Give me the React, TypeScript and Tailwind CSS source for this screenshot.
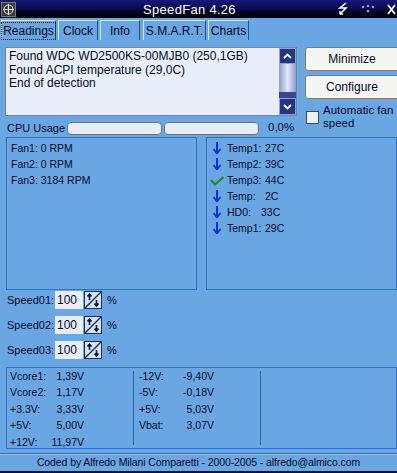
import React from "react";

const font = { fontFamily: '"Liberation Sans", Arial, sans-serif' };

function DownArrow() {
  return (
    <svg width="14" height="12" viewBox="0 0 14 12" className="shrink-0">
      <path d="M7 0v10" stroke="#1030e0" strokeWidth="2" />
      <path d="M3.5 7l3.5 4.5 3.5-4.5" stroke="#1030e0" strokeWidth="1.8" fill="none" />
    </svg>
  );
}

function Check() {
  return (
    <svg width="14" height="12" viewBox="0 0 14 12" className="shrink-0">
      <path d="M1 6l4 4.5L13.5 3" stroke="#1a8a2a" strokeWidth="2.2" fill="none" />
    </svg>
  );
}

function Spinner() {
  return (
    <svg width="18" height="18" viewBox="0 0 18 18" className="shrink-0">
      <rect x="0.5" y="0.5" width="17" height="17" fill="#d6e4f7" stroke="#1c2d6e" />
      <path d="M1 17L17 1" stroke="#1c2d6e" strokeWidth="1.4" />
      <path d="M5.5 9V3M3.5 5.5l2-2.5 2 2.5" stroke="#0a1440" strokeWidth="1.6" fill="none" />
      <path d="M12.5 9v6M10.5 12.5l2 2.5 2-2.5" stroke="#0a1440" strokeWidth="1.6" fill="none" />
    </svg>
  );
}

const tabs = [
  { label: "Readings", w: "w-[55px]", ml: "ml-[1px]" },
  { label: "Clock", w: "w-[40px]", ml: "ml-[2px]" },
  { label: "Info", w: "w-[40px]", ml: "ml-[2px]" },
  { label: "S.M.A.R.T.", w: "w-[63px]", ml: "ml-[3px]" },
  { label: "Charts", w: "w-[41px]", ml: "ml-[2px]" },
];

const temps = [
  { icon: "down", label: "Temp1:", value: "27C", vc: "" },
  { icon: "down", label: "Temp2:", value: "39C", vc: "" },
  { icon: "check", label: "Temp3:", value: "44C", vc: "" },
  { icon: "down", label: "Temp:", value: "2C", vc: "" },
  { icon: "down", label: "HD0:", value: "33C", vc: "-ml-[4px]" },
  { icon: "down", label: "Temp1:", value: "29C", vc: "" },
];

const volts1 = [
  ["Vcore1:", "1,39V"],
  ["Vcore2:", "1,17V"],
  ["+3.3V:", "3,33V"],
  ["+5V:", "5,00V"],
  ["+12V:", "11,97V"],
];

const volts2 = [
  ["-12V:", "-9,40V"],
  ["-5V:", "-0,18V"],
  ["+5V:", "5,03V"],
  ["Vbat:", "3,07V"],
];

export default function App() {
  return (
    <div
      className="w-[397px] h-[473px] overflow-hidden bg-[#6aa6e2] text-[#050a2a] flex flex-col whitespace-nowrap"
      style={font}
    >
      {/* title bar */}
      <div className="h-[18px] shrink-0 bg-gradient-to-b from-[#17177e] via-[#0b0b4a] to-black flex items-center">
        <svg width="15" height="15" viewBox="0 0 15 15" className="ml-[1px]">
          <rect x="0.5" y="0.5" width="14" height="14" fill="#3a3a3a" stroke="#777" />
          <circle cx="7.5" cy="7.5" r="4.5" fill="none" stroke="#ccc" strokeWidth="1.2" />
          <path d="M7.5 2v11M2 7.5h11" stroke="#ddd" strokeWidth="1.2" />
        </svg>
        <div className="flex-1 text-center text-white text-[13px] leading-none pl-[26px] tracking-[0.3px]">
          SpeedFan 4.26
        </div>
        <svg width="12" height="14" viewBox="0 0 12 14" className="mr-[12px]">
          <path d="M9 1L3 6h6L3 12" stroke="#fff" strokeWidth="1.6" fill="none" />
          <path d="M3 12v-3M3 12h3" stroke="#fff" strokeWidth="1.4" />
        </svg>
        <svg width="14" height="10" viewBox="0 0 14 10" className="mr-[12px]">
          <circle cx="2" cy="3" r="1.3" fill="#8a9ad0" />
          <circle cx="7" cy="2" r="1.3" fill="#8a9ad0" />
          <circle cx="12" cy="3" r="1.3" fill="#8a9ad0" />
          <circle cx="7" cy="7" r="1.3" fill="#8a9ad0" />
        </svg>
        <svg width="9" height="11" viewBox="0 0 9 11" className="mr-[1px]">
          <path d="M1 1l7 9M8 1L1 10" stroke="#fff" strokeWidth="1.8" />
        </svg>
      </div>

      {/* tabs */}
      <div className="h-[22px] shrink-0 flex items-end pt-[2px]">
        {tabs.map((t, i) => (
          <div
            key={t.label}
            className={`${t.w} ${t.ml} h-[20px] border-l border-t border-r border-l-[#d4e6fa] border-t-[#d4e6fa] border-r-[#28518c] flex items-center justify-center text-[12px] leading-none`}
          >
            {i === 0 ? (
              <span className="border border-dotted border-[#101830] px-[1px] py-[2px]">{t.label}</span>
            ) : (
              t.label
            )}
          </div>
        ))}
      </div>

      {/* top area */}
      <div className="flex mt-[7px] shrink-0">
        <div className="w-[300px] shrink-0 pl-[5px]">
          <div className="w-[292px] h-[69px] border border-[#7a8592] bg-[#e7eef9] flex">
            <div className="flex-1 px-[3px] pt-[2px] text-[12px] leading-[13.5px] overflow-hidden">
              <div>Found WDC WD2500KS-00MJB0 (250,1GB)</div>
              <div>Found ACPI temperature (29,0C)</div>
              <div>End of detection</div>
            </div>
            <div className="w-[17px] flex flex-col">
              <div className="h-[16px] bg-[#26357f] flex items-center justify-center border border-[#8fa0d8]">
                <svg width="9" height="6" viewBox="0 0 9 6">
                  <path d="M1 5l3.5-3.5L8 5" stroke="#fff" strokeWidth="1.8" fill="none" />
                </svg>
              </div>
              <div className="flex-1 bg-gradient-to-r from-[#8e9bd0] via-[#e3e9f8] to-[#8e9bd0]" />
              <div className="h-[6px] bg-[#38478e]" />
              <div className="h-[17px] bg-[#26357f] flex items-center justify-center border border-[#8fa0d8]">
                <svg width="9" height="6" viewBox="0 0 9 6">
                  <path d="M1 1l3.5 3.5L8 1" stroke="#fff" strokeWidth="1.8" fill="none" />
                </svg>
              </div>
            </div>
          </div>
          <div className="flex items-center h-[18px] mt-[3px] text-[11px]">
            <span className="ml-[2px] w-[60px]">CPU Usage</span>
            <div className="w-[95px] h-[13px] rounded-[4px] border border-[#6b7480] bg-[#e7eef9]" />
            <div className="w-[95px] h-[13px] ml-[2px] rounded-[4px] border border-[#6b7480] bg-[#e7eef9]" />
            <span className="ml-[9px] text-[11.5px]">0,0%</span>
          </div>
        </div>
        <div className="flex-1 flex flex-col pl-[5px]">
          <div className="h-[24px] w-[110px] rounded-[3px] border border-[#7c7c7c] bg-[#f5f5f1] flex items-center text-[12px]">
            <span className="w-[92px] text-center">Minimize</span>
          </div>
          <div className="h-[24px] w-[110px] mt-[4px] rounded-[3px] border border-[#7c7c7c] bg-[#f5f5f1] flex items-center text-[12px]">
            <span className="w-[92px] text-center">Configure</span>
          </div>
          <div className="flex mt-[4px] text-[11.5px] leading-[13px]">
            <div className="w-[13px] h-[13px] ml-[1px] mt-[8px] border border-[#3a4a6a] bg-[#eef2f8]" />
            <div className="ml-[4px] pt-[1px]">
              Automatic fan
              <br />
              speed
            </div>
          </div>
        </div>
      </div>

      {/* fans & temps */}
      <div className="flex h-[153px] shrink-0 text-[10.5px]">
        <div className="w-[191px] ml-[6px] border border-[#2f6fcf] pt-[2px] pl-[4px] leading-[16px]">
          <div>Fan1: 0 RPM</div>
          <div>Fan2: 0 RPM</div>
          <div>Fan3: 3184 RPM</div>
        </div>
        <div className="w-[191px] ml-[9px] border border-[#2f6fcf] pt-[2px] pl-[3px] leading-[16px]">
          {temps.map((t, i) => (
            <div key={i} className="flex items-center h-[16px]">
              {t.icon === "down" ? <DownArrow /> : <Check />}
              <span className="ml-[3px] w-[38px]">{t.label}</span>
              <span className={t.vc}>{t.value}</span>
            </div>
          ))}
        </div>
      </div>

      {/* speeds */}
      <div className="flex flex-col mt-[1px] shrink-0 text-[11px]">
        {["Speed01:", "Speed02:", "Speed03:"].map((s, i) => (
          <div key={s} className={`flex items-center h-[18px] ${i > 0 ? "mt-[7px]" : ""}`}>
            <span className="ml-[7px] w-[48px]">{s}</span>
            <div className="w-[28px] h-[18px] bg-[#e7eef9] pl-[2px] leading-[18px] text-[12px]">100</div>
            <div className="ml-[1px]">
              <Spinner />
            </div>
            <span className="ml-[5px]">%</span>
          </div>
        ))}
      </div>

      {/* voltages */}
      <div className="ml-[6px] mt-[8px] h-[82px] shrink-0 border border-[#2f6fcf] flex text-[10.5px] leading-[16.4px] overflow-hidden">
        <div className="w-[126px] pl-[3px] pr-[49px] pt-[0px]">
          {volts1.map(([l, v]) => (
            <div key={l} className="flex justify-between">
              <span>{l}</span>
              <span>{v}</span>
            </div>
          ))}
        </div>
        <div className="w-px bg-[#2a60b8] my-[3px]" />
        <div className="w-[126px] pl-[5px] pr-[46px]">
          {volts2.map(([l, v]) => (
            <div key={l} className="flex justify-between">
              <span>{l}</span>
              <span>{v}</span>
            </div>
          ))}
        </div>
        <div className="w-px bg-[#2a60b8] my-[3px]" />
        <div className="flex-1" />
      </div>

      {/* footer */}
      <div className="mt-[4px] border-t border-t-[#3c6aa8] border-b border-b-[#9ac2ee] h-0 shrink-0" />
      <div className="flex-1 flex items-center justify-center text-[10.5px] tracking-[-0.1px]">
        Coded by Alfredo Milani Comparetti - 2000-2005 - alfredo@almico.com
      </div>
      <div className="h-[2px] shrink-0 bg-[#0a1038]" />
    </div>
  );
}
